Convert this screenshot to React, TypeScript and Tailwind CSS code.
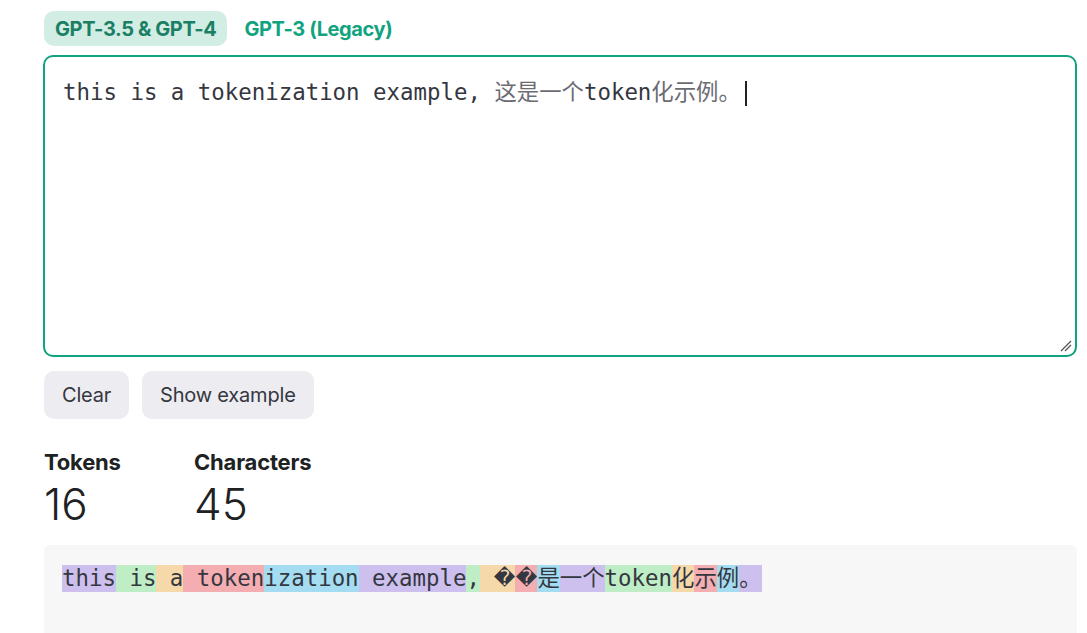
import React from "react";

const mono = { fontFamily: '"DejaVu Sans Mono", "Noto Sans CJK SC", monospace' } as React.CSSProperties;
const repl = { fontFamily: '"DejaVu Sans", sans-serif' } as React.CSSProperties;

const tokens: { t: string; c: string; r?: boolean; lead?: boolean }[] = [
  { t: "this", c: "bg-[#cdc0ee]" },
  { t: " is", c: "bg-[#beedc6]" },
  { t: " a", c: "bg-[#f6d9aa]" },
  { t: " token", c: "bg-[#f4aeb1]" },
  { t: "ization", c: "bg-[#a4ddf2]" },
  { t: " example", c: "bg-[#cdc0ee]" },
  { t: ",", c: "bg-[#beedc6]" },
  { t: "\uFFFD", c: "bg-[#f6d9aa]", r: true, lead: true },
  { t: "\uFFFD", c: "bg-[#f4aeb1]", r: true },
  { t: "是", c: "bg-[#a4ddf2]" },
  { t: "一个", c: "bg-[#cdc0ee]" },
  { t: "token", c: "bg-[#beedc6]" },
  { t: "化", c: "bg-[#f6d9aa]" },
  { t: "示", c: "bg-[#f4aeb1]" },
  { t: "例", c: "bg-[#a4ddf2]" },
  { t: "。", c: "bg-[#cdc0ee]" },
];

export default function App() {
  return (
    <div
      className="min-h-screen bg-white pl-[44px] pt-[11px] text-[#353740]"
      style={{ fontFamily: 'Inter, "Noto Sans", sans-serif' }}
    >
      <div className="w-[1033px]">
        <div className="flex gap-[6px]">
          <div className="h-[35px] px-[11px] flex items-center rounded-[10px] bg-[#d2ede4] text-[#1a7f64] text-[20px] font-bold tracking-[-0.4px]">
            GPT-3.5 &amp; GPT-4
          </div>
          <div className="h-[35px] px-[11px] flex items-center rounded-[10px] text-[#10a37f] text-[20px] font-bold tracking-[-0.4px]">
            GPT-3 (Legacy)
          </div>
        </div>

        <div className="relative mt-[9px] -ml-[1px] w-[1034px] h-[302px] rounded-[10px] border-2 border-[#10a37f] pt-[22px] pl-[18px]">
          <div className="flex items-center h-[28px] text-[22.4px] text-[#353740]" style={mono}>
            <span className="whitespace-pre">this is a tokenization example, </span>
            <span className="whitespace-pre text-[#6b6b74]">这是一个</span>
            <span className="whitespace-pre">token</span>
            <span className="whitespace-pre text-[#6b6b74]">化示例。</span>
            <span className="inline-block ml-[4px] w-[2px] h-[25px] bg-[#202123]" />
          </div>
          <svg className="absolute right-[3px] bottom-[3px]" width="12" height="12" viewBox="0 0 12 12">
            <line x1="1" y1="11" x2="11" y2="1" stroke="#555" strokeWidth="1.2" />
            <line x1="5" y1="11" x2="11" y2="5" stroke="#555" strokeWidth="1.2" />
          </svg>
        </div>

        <div className="flex gap-[13px] mt-[14px]">
          <button className="h-[48px] px-[18px] rounded-[10px] bg-[#ececf1] text-[20px] tracking-[-0.2px] text-[#353740]">
            Clear
          </button>
          <button className="h-[48px] px-[18px] rounded-[10px] bg-[#ececf1] text-[20px] tracking-[-0.2px] text-[#353740]">
            Show example
          </button>
        </div>

        <div className="flex mt-[29px] text-[#202123]">
          <div className="w-[150px]">
            <div className="text-[22px] font-bold leading-[28px] tracking-[-0.2px]">Tokens</div>
            <div className="text-[44px] leading-[56px] font-light">16</div>
          </div>
          <div>
            <div className="text-[22px] font-bold leading-[28px] tracking-[-0.2px]">Characters</div>
            <div className="text-[44px] leading-[56px] font-light">45</div>
          </div>
        </div>

        <div className="mt-[13px] h-[200px] rounded-[6px] bg-[#f7f7f8] pt-[20px] pl-[18px]">
          <div className="flex items-stretch h-[27px] text-[22.4px] leading-[27px] text-[#353740] whitespace-pre" style={mono}>
            {tokens.map((tk, i) =>
              tk.r ? (
                <span key={i} className={`${tk.c} flex items-center`}>
                  {tk.lead ? <span className="inline-block w-[13.5px]"> </span> : null}
                  <span className="inline-block w-[22px] text-center text-[21px] leading-[27px] text-[#353740]" style={repl}>
                    {tk.t}
                  </span>
                </span>
              ) : (
                <span key={i} className={tk.c}>
                  {tk.t}
                </span>
              )
            )}
          </div>
        </div>
      </div>
    </div>
  );
}
